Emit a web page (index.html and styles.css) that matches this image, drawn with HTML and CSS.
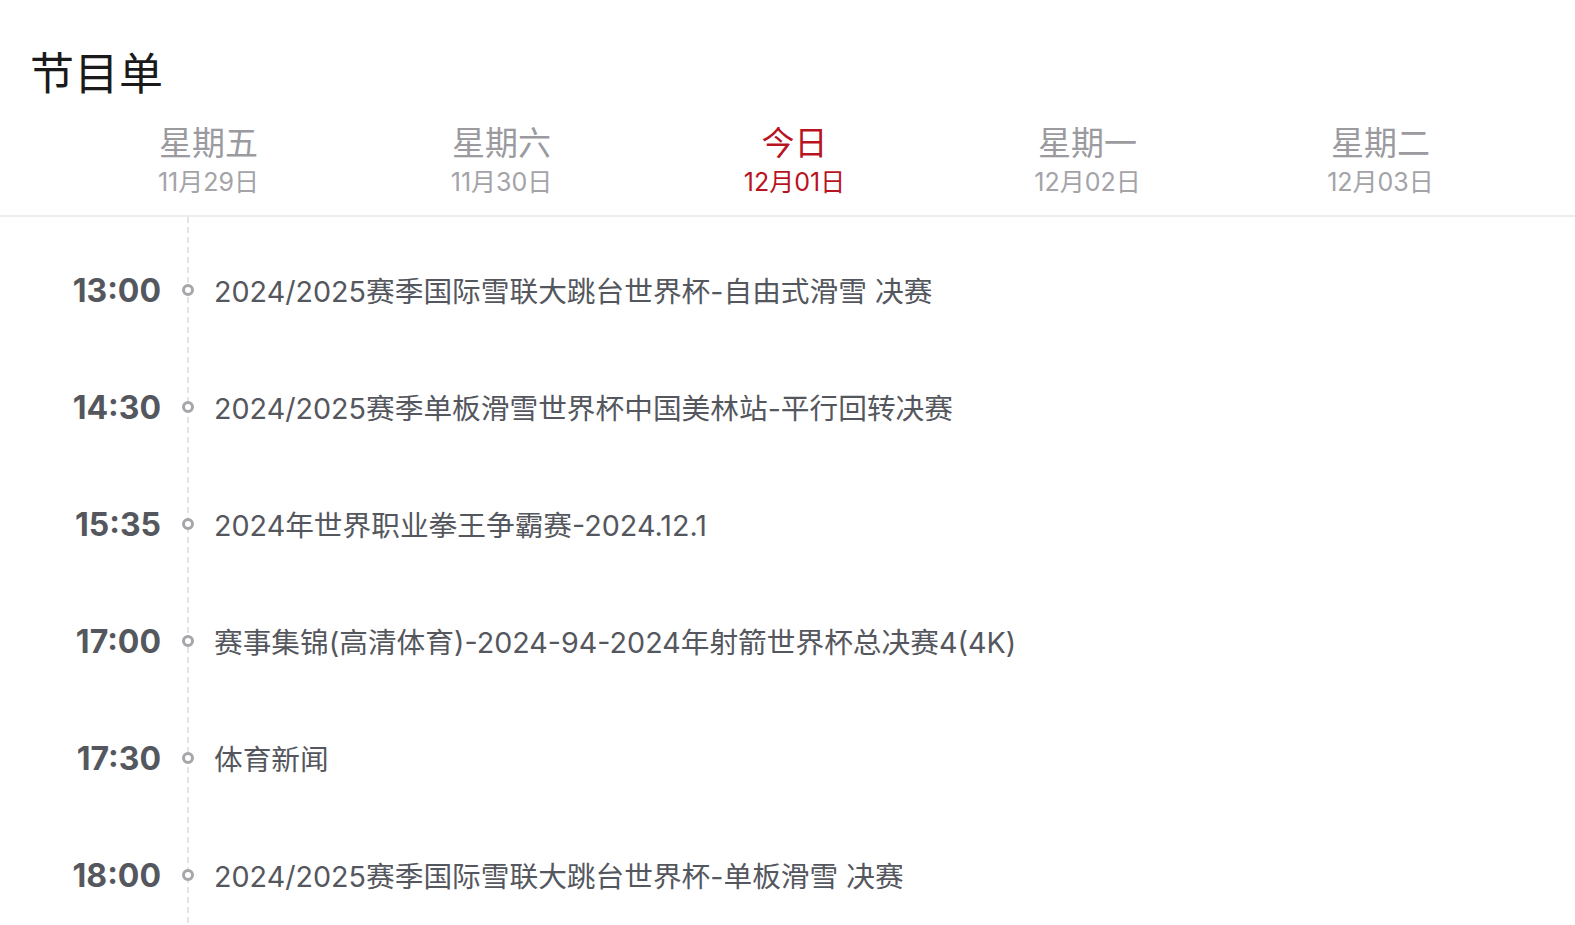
FILE: index.html
```html
<!DOCTYPE html>
<html lang="zh-CN">
<head>
<meta charset="utf-8">
<title>节目单</title>
<link rel="stylesheet" href="styles.css">
</head>
<body>
<div class="page">
  <h1 class="title">节目单</h1>
  <nav class="tabs">
    <div class="tab"><div class="tab-day">星期五</div><div class="tab-date">11月29日</div></div>
    <div class="tab"><div class="tab-day">星期六</div><div class="tab-date">11月30日</div></div>
    <div class="tab active"><div class="tab-day">今日</div><div class="tab-date">12月01日</div></div>
    <div class="tab"><div class="tab-day">星期一</div><div class="tab-date">12月02日</div></div>
    <div class="tab"><div class="tab-day">星期二</div><div class="tab-date">12月03日</div></div>
  </nav>
  <ul class="schedule">
    <li class="item"><span class="time">13:00</span><span class="dot"></span><span class="name">2024/2025赛季国际雪联大跳台世界杯-自由式滑雪 决赛</span></li>
    <li class="item"><span class="time">14:30</span><span class="dot"></span><span class="name">2024/2025赛季单板滑雪世界杯中国美林站-平行回转决赛</span></li>
    <li class="item"><span class="time">15:35</span><span class="dot"></span><span class="name">2024年世界职业拳王争霸赛-2024.12.1</span></li>
    <li class="item"><span class="time">17:00</span><span class="dot"></span><span class="name">赛事集锦(高清体育)-2024-94-2024年射箭世界杯总决赛4(4K)</span></li>
    <li class="item"><span class="time">17:30</span><span class="dot"></span><span class="name">体育新闻</span></li>
    <li class="item"><span class="time">18:00</span><span class="dot"></span><span class="name">2024/2025赛季国际雪联大跳台世界杯-单板滑雪 决赛</span></li>
  </ul>
</div>
</body>
</html>
```
FILE: styles.css
```css
* { box-sizing: border-box; }
html, body {
  margin: 0;
  padding: 0;
  background: #ffffff;
}
body {
  font-family: Inter, "Noto Sans CJK SC", sans-serif;
  width: 1575px;
  height: 925px;
  overflow: hidden;
}
.title {
  margin: 0;
  padding: 45px 0 0 30px;
  font-size: 44px;
  line-height: 52px;
  font-weight: 400;
  color: #1a1a1a;
  letter-spacing: 0.5px;
  font-family: "Noto Sans CJK SC", sans-serif;
}
.tabs {
  display: flex;
  padding: 26px 0 0 62px;
  height: 120px;
  border-bottom: 2px solid #ececec;
}
.tab {
  width: 293px;
  display: flex;
  flex-direction: column;
  align-items: center;
  color: #9a9a9f;
}
.tab-day {
  font-size: 33px;
  line-height: 40px;
}
.tab-date {
  font-size: 25px;
  line-height: 30px;
  margin-top: 4px;
  color: #a3a3a8;
}
.tab.active .tab-day,
.tab.active .tab-date {
  color: #b8141f;
}
.schedule {
  list-style: none;
  margin: 0;
  padding: 14px 0 0 0;
  position: relative;
}
.schedule::before {
  content: "";
  position: absolute;
  left: 187px;
  top: 0;
  bottom: 0;
  border-left: 2px dashed #e4e4e6;
}
.item {
  display: flex;
  align-items: center;
  height: 117px;
  position: relative;
}
.time {
  width: 161px;
  text-align: right;
  font-size: 32px;
  font-weight: 700;
  color: #55575e;
  padding-top: 2px;
}
.dot {
  width: 12px;
  height: 12px;
  border: 3px solid #a5a6aa;
  border-radius: 50%;
  background: #fff;
  margin-left: 21px;
  margin-right: 20px;
  position: relative;
  z-index: 1;
}
.name {
  font-size: 28.7px;
  color: #55575e;
  white-space: nowrap;
  padding-bottom: 1px;
}
```
